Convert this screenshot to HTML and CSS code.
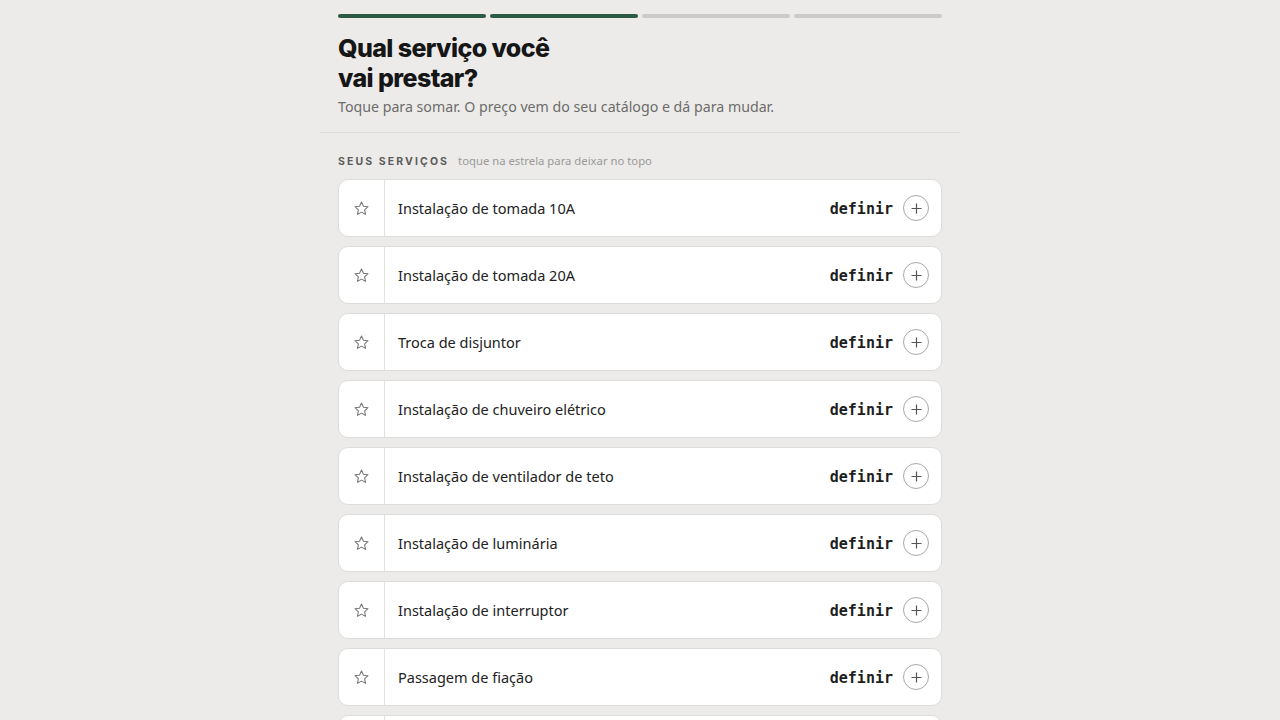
FILE: index.html
```html
<!DOCTYPE html>
<html lang="pt-BR">
<head>
<meta charset="utf-8">
<title>Qual serviço você vai prestar?</title>
<link rel="stylesheet" href="styles.css">
</head>
<body>
<main class="page">
  <header class="head">
    <div class="progress">
      <span class="seg on"></span><span class="seg on"></span><span class="seg"></span><span class="seg"></span>
    </div>
    <h1 class="title">Qual serviço você<br>vai prestar?</h1>
    <p class="sub">Toque para somar. O preço vem do seu catálogo e dá para mudar.</p>
  </header>
  <section class="list">
    <div class="label"><span class="caps">SEUS SERVIÇOS</span><span class="hint">toque na estrela para deixar no topo</span></div>
    <div class="rows" id="rows"></div>
  </section>
</main>
<template id="row">
  <div class="row">
    <button class="star" aria-label="favoritar"><svg width="17" height="17" viewBox="0 0 24 24"><path d="M12 2.8l2.75 5.9 6.45.75-4.78 4.42 1.27 6.38L12 17.1l-5.69 3.15 1.27-6.38L2.8 9.45l6.45-.75z" fill="none" stroke="#777" stroke-width="1.5" stroke-linejoin="round"/></svg></button>
    <span class="name"></span>
    <span class="price">definir</span>
    <button class="plus" aria-label="somar"><svg width="13" height="13" viewBox="0 0 13 13"><path d="M6.5 1.5v10M1.5 6.5h10" stroke="#555" stroke-width="1.2"/></svg></button>
  </div>
</template>
<script>
  var names = ["Instalação de tomada 10A","Instalação de tomada 20A","Troca de disjuntor","Instalação de chuveiro elétrico","Instalação de ventilador de teto","Instalação de luminária","Instalação de interruptor","Passagem de fiação","Instalação de quadro de distribuição"];
  var tpl = document.getElementById('row');
  var box = document.getElementById('rows');
  names.forEach(function(n){
    var c = tpl.content.cloneNode(true);
    c.querySelector('.name').textContent = n;
    box.appendChild(c);
  });
</script>
</body>
</html>
```
FILE: styles.css
```css
* { box-sizing: border-box; }
html, body { margin: 0; padding: 0; }
body {
  background: #ecebe9;
  font-family: "Noto Sans", "Open Sans", sans-serif;
  color: #1f1f1f;
}
.page {
  width: 640px;
  margin: 0 auto;
}
.head {
  padding: 14px 18px 15px;
  border-bottom: 1px solid #dcdbd8;
}
.progress {
  display: flex;
  gap: 4px;
}
.seg {
  flex: 1;
  height: 4px;
  border-radius: 2px;
  background: #c9c9c7;
}
.seg.on { background: #2b5b45; }
.title {
  margin: 15px 0 0;
  font-family: Inter, "Liberation Sans", sans-serif;
  font-weight: 800;
  font-size: 25px;
  line-height: 30px;
  letter-spacing: -0.6px;
  color: #161616;
}
.sub {
  margin: 4px 0 0;
  font-size: 14.2px;
  line-height: 20px;
  color: #6c6c6a;
}
.list {
  padding: 20px 18px 0;
}
.label {
  display: flex;
  align-items: baseline;
  gap: 9px;
  margin-bottom: 11px;
}
.caps {
  font-family: Inter, "Liberation Sans", sans-serif;
  font-size: 10.5px;
  font-weight: 700;
  letter-spacing: 2.1px;
  color: #5c5c5a;
}
.hint {
  font-size: 11.3px;
  color: #9a9a98;
}
.rows {
  display: flex;
  flex-direction: column;
  gap: 9px;
}
.row {
  display: flex;
  align-items: center;
  height: 58px;
  background: #fff;
  border: 1.5px solid #dcdcda;
  border-radius: 10px;
}
.star {
  width: 46px;
  height: 100%;
  flex: none;
  display: flex;
  align-items: center;
  justify-content: center;
  background: none;
  border: 0;
  border-right: 1.5px solid #e2e2e0;
  padding: 0;
}
.name {
  flex: 1;
  padding-left: 13px;
  font-size: 14.5px;
  color: #222;
}
.price {
  font-family: "DejaVu Sans Mono", "Liberation Mono", monospace;
  font-weight: 700;
  font-size: 15px;
  line-height: 20px;
  padding-top: 2px;
  color: #1e1e1e;
  margin-right: 10px;
}
.plus {
  width: 26px;
  height: 26px;
  flex: none;
  margin-right: 12px;
  border-radius: 50%;
  border: 1.5px solid #a9a9a7;
  background: #fff;
  display: flex;
  align-items: center;
  justify-content: center;
  padding: 0;
}
```
